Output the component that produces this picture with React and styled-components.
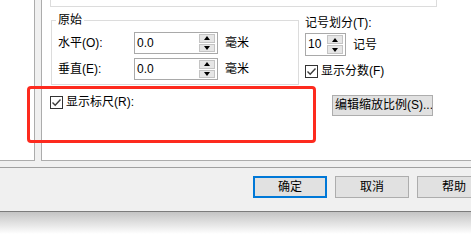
import styled, { createGlobalStyle } from "styled-components";

const Global = createGlobalStyle`
  body {
    margin: 0;
    background: #fff;
    font-family: "Liberation Sans", "Noto Sans CJK SC", sans-serif;
    font-size: 12px;
    color: #000;
  }
`;

const Window = styled.div`
  position: relative;
  width: 471px;
  height: 247px;
  overflow: hidden;
  background: #fff;
`;

const Main = styled.div`
  display: flex;
  height: 161px;
`;

const LeftPanel = styled.div`
  box-sizing: border-box;
  width: 35px;
  background: #fff;
  border-right: 1px solid #acacac;
  border-bottom: 1px solid #acacac;
`;

const Gutter = styled.div`
  width: 6px;
  background: #f0f0f0;
`;

const Page = styled.div`
  flex: 1;
  display: flex;
  flex-direction: column;
  background: #fff;
  border-left: 1px solid #acacac;
  border-bottom: 1px solid #acacac;
`;

const TopBox = styled.div`
  box-sizing: border-box;
  margin-left: 8px;
  width: 387px;
  height: 7px;
  border: 1px solid #dcdcdc;
  border-top: none;
`;

const MiddleRow = styled.div`
  display: flex;
  align-items: flex-start;
  margin: 6px 0 0 9px;
`;

const Group = styled.fieldset`
  box-sizing: border-box;
  width: 248px;
  margin: 0;
  padding: 5px 6px 4px 6px;
  border: 1px solid #dcdcdc;
`;

const Legend = styled.legend`
  margin-left: -2px;
  padding: 0 2px;
  line-height: 14px;
`;

const FieldRow = styled.div`
  display: flex;
  align-items: center;
  height: 22px;
  & + & {
    margin-top: 4px;
  }
`;

const FieldLabel = styled.span`
  width: 76px;
  line-height: 14px;
`;

const SpinBox = styled.div`
  box-sizing: border-box;
  display: flex;
  justify-content: space-between;
  width: ${(p) => p.$w}px;
  height: ${(p) => p.$h}px;
  padding: 1px 2px 1px 2px;
  border: 1px solid #a9a9a9;
  background: #fff;
`;

const SpinValue = styled.span`
  padding-top: 2px;
  line-height: 14px;
`;

const Spinner = styled.div`
  display: flex;
  flex-direction: column;
  gap: 1px;
  width: 16px;
`;

const SpinButton = styled.div`
  box-sizing: border-box;
  flex: 1;
  display: flex;
  align-items: center;
  justify-content: center;
  background: #e6e6e6;
  border: 1px solid #c4c4c4;
`;

const Arrow = styled.span`
  width: 0;
  height: 0;
  border-left: 3px solid transparent;
  border-right: 3px solid transparent;
  ${(p) =>
    p.$down ? "border-top: 4px solid #000;" : "border-bottom: 4px solid #000;"}
`;

const Unit = styled.span`
  margin-left: 7px;
  line-height: 14px;
`;

const RightCol = styled.div`
  display: flex;
  flex-direction: column;
  margin: 3px 0 0 6px;
`;

const PlainLabel = styled.span`
  line-height: 14px;
`;

const SpinRow = styled.div`
  display: flex;
  align-items: center;
  margin-top: 3px;
`;

const CheckRow = styled.label`
  display: flex;
  align-items: center;
  gap: 3px;
  margin-top: ${(p) => p.$mt || 0}px;
  line-height: 14px;
`;

const Box = styled.span`
  box-sizing: border-box;
  display: inline-flex;
  align-items: center;
  justify-content: center;
  width: 13px;
  height: 13px;
  border: 1px solid #333;
  background: #fff;
`;

const BottomRow = styled.div`
  display: flex;
  justify-content: space-between;
  align-items: flex-start;
  width: 383px;
  margin: 10px 0 0 8px;
`;

const SmallButton = styled.div`
  box-sizing: border-box;
  width: 101px;
  height: 21px;
  padding-left: 2px;
  border: 1px solid #adadad;
  background: #e1e1e1;
  line-height: 19px;
  white-space: nowrap;
  overflow: hidden;
`;

const Strip = styled.div`
  height: 6px;
  background: #f0f0f0;
`;

const ButtonBar = styled.div`
  display: flex;
  gap: 8px;
  height: 35px;
  padding: 8px 0 0 253px;
  box-sizing: content-box;
  background: #f0f0f0;
  border-top: 1px solid #a0a0a0;
  border-bottom: 1px solid #7c7c7c;
`;

const DialogButton = styled.div`
  box-sizing: border-box;
  flex: none;
  display: flex;
  align-items: center;
  justify-content: center;
  width: 74px;
  height: 22px;
  background: #e1e1e1;
  border: ${(p) => (p.$primary ? "2px solid #0078d7" : "1px solid #adadad")};
  line-height: 14px;
`;

const Shadow = styled.div`
  height: 22px;
  background: linear-gradient(#c4c4c4, #fff);
`;

const Highlight = styled.div`
  position: absolute;
  left: 27px;
  top: 86px;
  width: 289px;
  height: 57px;
  box-sizing: border-box;
  border: 3px solid #fd2a1e;
  border-radius: 4px;
  pointer-events: none;
`;

function Check() {
  return (
    <Box>
      <svg width="11" height="11" viewBox="0 0 11 11">
        <polyline
          points="1.5,5.5 4.2,8.2 9.5,2.5"
          fill="none"
          stroke="#3c3c3c"
          strokeWidth="1.4"
        />
      </svg>
    </Box>
  );
}

function Spin({ value, w, h }) {
  return (
    <SpinBox $w={w} $h={h}>
      <SpinValue>{value}</SpinValue>
      <Spinner>
        <SpinButton>
          <Arrow />
        </SpinButton>
        <SpinButton>
          <Arrow $down />
        </SpinButton>
      </Spinner>
    </SpinBox>
  );
}

export default function App() {
  return (
    <Window>
      <Global />
      <Main>
        <LeftPanel />
        <Gutter />
        <Page>
          <TopBox />
          <MiddleRow>
            <Group>
              <Legend>原始</Legend>
              <FieldRow>
                <FieldLabel>水平(O):</FieldLabel>
                <Spin value="0.0" w={84} h={22} />
                <Unit>毫米</Unit>
              </FieldRow>
              <FieldRow>
                <FieldLabel>垂直(E):</FieldLabel>
                <Spin value="0.0" w={84} h={22} />
                <Unit>毫米</Unit>
              </FieldRow>
            </Group>
            <RightCol>
              <PlainLabel>记号划分(T):</PlainLabel>
              <SpinRow>
                <Spin value="10" w={41} h={23} />
                <Unit>记号</Unit>
              </SpinRow>
              <CheckRow $mt={8}>
                <Check />
                <span>显示分数(F)</span>
              </CheckRow>
            </RightCol>
          </MiddleRow>
          <BottomRow>
            <CheckRow>
              <Check />
              <span>显示标尺(R):</span>
            </CheckRow>
            <SmallButton>编辑缩放比例(S)...</SmallButton>
          </BottomRow>
        </Page>
      </Main>
      <Strip />
      <ButtonBar>
        <DialogButton $primary>确定</DialogButton>
        <DialogButton>取消</DialogButton>
        <DialogButton>帮助</DialogButton>
      </ButtonBar>
      <Shadow />
      <Highlight />
    </Window>
  );
}
